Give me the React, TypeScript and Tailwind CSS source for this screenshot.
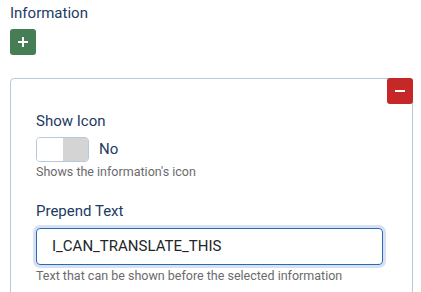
import React from 'react';

export default function App() {
  return (
    <div
      className="w-[421px] h-[292px] overflow-hidden bg-white px-[10px] pt-[4px]"
      style={{ fontFamily: 'Roboto, "Noto Sans", sans-serif' }}
    >
      <div className="text-[15px] leading-[18px] text-[#1c3a63]">Information</div>

      {/* Add button */}
      <button className="mt-[7px] flex h-[26px] w-[26px] items-center justify-center rounded-[3px] bg-[#457d54]">
        <svg width="12" height="12" viewBox="0 0 12 12">
          <path d="M6 1v10M1 6h10" stroke="#fff" strokeWidth="2" />
        </svg>
      </button>

      {/* Repeatable card */}
      <div className="relative mt-[23px] h-[260px] w-[403px] rounded-[4px] border border-[#b8c8dc] pl-[25px] pt-[33px]">
        <button className="absolute right-[-1px] top-[-1px] flex h-[26px] w-[26px] items-center justify-center rounded-[3px] bg-[#c52827]">
          <svg width="12" height="12" viewBox="0 0 12 12">
            <path d="M1 6h10" stroke="#fff" strokeWidth="2" />
          </svg>
        </button>

        <div className="text-[15px] leading-[18px] text-[#1c3a63]">Show Icon</div>
        <div className="mt-[7px] flex items-center gap-[10px]">
          <div className="flex h-[25px] w-[53px] overflow-hidden rounded-[4px] border border-[#b8c8dc]">
            <div className="flex-1 bg-white" />
            <div className="flex-1 bg-[#d4d4d4]" />
          </div>
          <span className="text-[15px] text-[#1c3a63]">No</span>
        </div>
        <div className="mt-[2px] text-[12.5px] leading-[16px] text-[#6b6b6b]">Shows the information's icon</div>

        <div className="mt-[22px] text-[15px] leading-[18px] text-[#1c3a63]">Prepend Text</div>
        <div className="mt-[8px] flex h-[37px] w-[347px] items-center rounded-[4px] border border-[#2a69b8] pl-[15px] text-[15px] text-[#22262a] shadow-[0_0_0_3px_#d6e2f2]">
          I_CAN_TRANSLATE_THIS
        </div>
        <div className="mt-[3px] text-[12.5px] leading-[16px] text-[#6b6b6b]">
          Text that can be shown before the selected information
        </div>
      </div>
    </div>
  );
}
